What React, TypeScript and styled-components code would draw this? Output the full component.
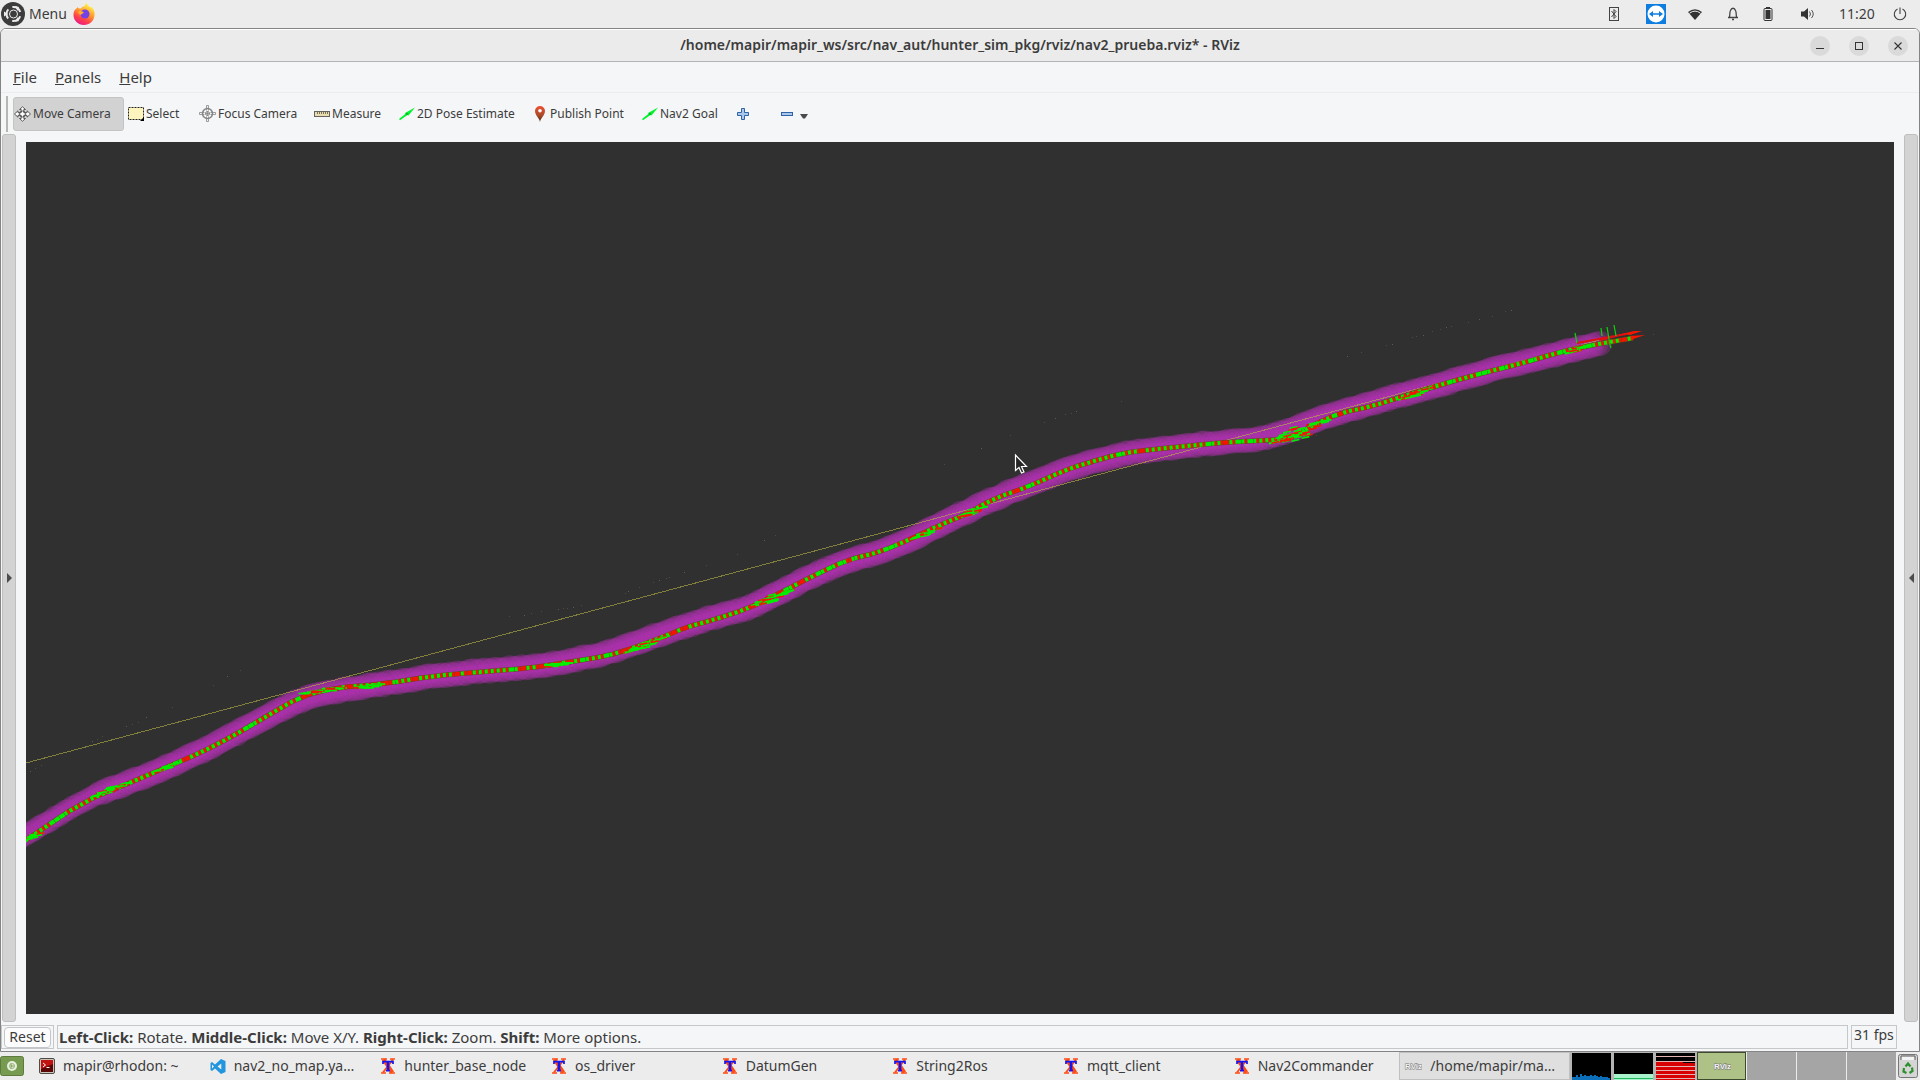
import React from "react";
import styled, { createGlobalStyle } from "styled-components";

const GlobalStyle = createGlobalStyle`
  * { box-sizing: border-box; }
  body { margin: 0; background: #ececec; }
  body, button { font-family: "Noto Sans", "Open Sans", sans-serif; font-size: 14px; line-height: 20px; color: #3c3c3c; }
  button { border: 0; padding: 0; background: none; }
  svg { display: block; flex: none; }
`;

const Desktop = styled.div`
  height: 100vh;
  display: flex;
  flex-direction: column;
  overflow: hidden;
`;

/* ---------- top panel ---------- */
const TopPanel = styled.header`
  height: 28px;
  flex: none;
  display: flex;
  align-items: center;
  justify-content: space-between;
  padding: 0 1px;
`;
const PanelGroup = styled.div`
  display: flex;
  align-items: center;
`;
const MenuButton = styled.button`
  display: flex;
  align-items: center;
  gap: 4px;
  margin-right: 6px;
`;
const TrayButton = styled.button<{ $w: number }>`
  width: ${(p) => p.$w}px;
  height: 28px;
  display: flex;
  align-items: center;
  justify-content: center;
`;

/* ---------- window ---------- */
const WindowFrame = styled.section`
  flex: 1;
  min-height: 0;
  display: flex;
  flex-direction: column;
  background: #f5f6f7;
  border: 1px solid #848484;
  border-radius: 6px 6px 0 0;
  overflow: hidden;
`;
const TitleBar = styled.div`
  height: 33px;
  flex: none;
  display: grid;
  grid-template-columns: 1fr auto 1fr;
  align-items: center;
  background: #ebebeb;
  border-top: 1px solid #ffffff;
  border-bottom: 1px solid #b4b4b4;
`;
const Title = styled.h1`
  grid-column: 2;
  margin: 0;
  padding-bottom: 2px;
  font-size: 14px;
  line-height: 20px;
  font-weight: 600;
`;
const WindowButtons = styled.div`
  display: flex;
  justify-content: flex-end;
  gap: 19px;
  padding-right: 11px;
`;
const RoundButton = styled.button`
  width: 20px;
  height: 20px;
  border-radius: 50%;
  background: #dadada;
  display: flex;
  align-items: center;
  justify-content: center;
`;
const MenuBar = styled.nav`
  height: 31px;
  flex: none;
  display: flex;
  align-items: center;
  gap: 18px;
  padding-left: 12px;
  border-bottom: 1px solid #ebecec;
`;
const MenuItem = styled.button`
  font-size: 15px;
  &::first-letter { text-decoration: underline; }
`;
const ToolBar = styled.div`
  height: 41px;
  flex: none;
  display: flex;
  align-items: center;
  gap: 2px;
  padding-left: 5px;
`;
const Grip = styled.span`
  width: 2px;
  height: 36px;
  background: #b6b6b6;
  margin-right: 3px;
`;
const ToolButton = styled.button<{ $w: number; $gap?: number; $active?: boolean }>`
  width: ${(p) => p.$w}px;
  height: 34px;
  display: flex;
  align-items: center;
  gap: ${(p) => p.$gap ?? 2}px;
  font-size: 12px;
  white-space: nowrap;
  border: 1px solid ${(p) => (p.$active ? "#c4c4c4" : "transparent")};
  border-radius: 3px;
  background: ${(p) => (p.$active ? "#d2d2d2" : "transparent")};
`;
const Workspace = styled.main`
  flex: 1;
  min-height: 0;
  display: flex;
  gap: 10px;
  padding: 0 1px;
`;
const SideHandle = styled.button`
  width: 14px;
  flex: none;
  border: 1px solid #bfbfbf;
  border-radius: 3px;
  background: #d3d3d3;
  display: flex;
  align-items: center;
  justify-content: center;
`;
const Viewport = styled.div`
  flex: 1;
  min-width: 0;
  margin: 8px 0;
  background: #303030;
  overflow: hidden;
`;
const Scene = styled.svg`
  width: 100%;
  height: 100%;
`;
const StatusBar = styled.footer`
  height: 29px;
  flex: none;
  display: flex;
  gap: 3px;
  padding: 3px 22px 2px 0;
  font-size: 15px;
`;
const StatusCell = styled.div<{ $grow?: boolean }>`
  flex: ${(p) => (p.$grow ? "1" : "none")};
  display: flex;
  align-items: center;
  padding: 0 ${(p) => (p.$grow ? 1 : 2)}px;
  border: 1px solid #c6c7c8;
  white-space: pre;
`;
const ResetButton = styled.button`
  width: 47px;
  height: 21px;
  border: 1px solid #c2c6cb;
  border-radius: 4px;
  background: #fcfcfc;
  font-size: 14px;
  line-height: 18px;
`;
const Fps = styled.output`
  width: 40px;
  font-size: 14px;
  white-space: nowrap;
  padding-bottom: 4px;
`;

/* ---------- bottom panel ---------- */
const BottomPanel = styled.footer`
  height: 28px;
  flex: none;
  display: flex;
  align-items: stretch;
`;
const DesktopButton = styled.button`
  width: 24px;
  margin-right: 10px;
  display: flex;
  align-items: center;
`;
const TaskList = styled.div`
  flex: 1;
  min-width: 0;
  display: grid;
  grid-template-columns: repeat(9, 1fr);
`;
const Task = styled.button<{ $active?: boolean }>`
  min-width: 0;
  display: flex;
  align-items: center;
  gap: 8px;
  padding: 0 8px 0 4px;
  border: 1px solid ${(p) => (p.$active ? "#c0c0c0" : "transparent")};
  background: ${(p) => (p.$active ? "#dfdfdf" : "transparent")};
  white-space: nowrap;
`;
const Monitors = styled.div`
  display: flex;
  gap: 3px;
  padding: 1px 2px 0 2px;
  background: #b4b4b4;
`;
const Pager = styled.div`
  display: flex;
  gap: 1px;
  background: #ececec;
`;
const Space = styled.button<{ $active?: boolean }>`
  width: 49px;
  background: ${(p) => (p.$active ? "#aec287" : "#a5a5a5")};
  border: ${(p) => (p.$active ? "1px solid #3d4a2c" : "0")};
  display: flex;
  align-items: center;
  justify-content: center;
`;
const Trash = styled.button`
  width: 24px;
  display: flex;
  align-items: center;
  justify-content: center;
`;

/* ---------- icons ---------- */
const UbuntuMenuIcon = () => (
  <svg width="24" height="24" viewBox="0 0 24 24">
    <circle cx="12" cy="12" r="12" fill="#3c3c3c" />
    <circle cx="12.5" cy="12" r="4" fill="#3c3c3c" stroke="#ececec" strokeWidth="1" />
    <circle cx="12.5" cy="12" r="7" fill="none" stroke="#ececec" strokeWidth="2" strokeDasharray="10 4.66" strokeDashoffset="-2.3" />
    <path d="M3 9.500V14.500L7 12ZM14 4l4 1-1.500 4ZM14 20l4-1-1.500-4Z" fill="#ececec" />
  </svg>
);
const FirefoxIcon = () => (
  <svg width="22" height="22" viewBox="0 0 22 22">
    <defs>
      <linearGradient id="fox" x1="0.8" y1="0" x2="0.3" y2="1">
        <stop offset="0.1" stopColor="#fff04a" />
        <stop offset="0.45" stopColor="#ff9a2a" />
        <stop offset="0.75" stopColor="#ff3e4c" />
        <stop offset="1" stopColor="#e51a8c" />
      </linearGradient>
    </defs>
    <path d="M4.500 4C5 5 6 5.500 8 5.500C9 3.500 11 3 12 3.500C11.500 2 12.500 .5 13.500 0C14 2 16 3 17.500 4.500C18 4.500 18 4 18 3.500C21 6 22 9 21.500 12.500C21 18 16.500 22 11 22C5 22 .5 17.500 .5 12C.3 8.500 1.800 6.500 3.500 5.500Z" fill="url(#fox)" />
    <circle cx="12" cy="11" r="4.500" fill="#7542e5" />
    <path d="M5 9C7 7.500 9 8 11 9.500C10 11 8 10.500 8 12C7 11.500 5.500 11 5 9Z" fill="#ffb02e" />
  </svg>
);
const BluetoothIcon = () => (
  <svg width="12" height="16" viewBox="0 0 12 16" fill="none" stroke="#444">
    <rect x="1.500" y="1.500" width="9" height="13" />
    <path d="M3.500 5L8 10.500L6 12.500V3.500L8 5.500L3.500 11" />
  </svg>
);
const TeamViewerIcon = () => (
  <svg width="20" height="20" viewBox="0 0 20 20">
    <rect width="20" height="20" fill="#0e7de0" />
    <circle cx="10" cy="10" r="8.500" fill="#fff" />
    <path d="M3 10L7 7V9.300H13V7L17 10L13 13V10.700H7V13Z" fill="#0e7de0" />
  </svg>
);
const WifiIcon = () => (
  <svg width="16" height="12" viewBox="0 0 16 12">
    <path d="M8 12L1 4Q8-1.500 15 4Z" fill="#333" />
    <path d="M2.500 5.200Q8 1 13.500 5.200" stroke="#ececec" fill="none" strokeWidth="1" />
  </svg>
);
const BellIcon = () => (
  <svg width="12" height="14" viewBox="0 0 12 14" fill="none" stroke="#444">
    <path d="M1 10.500H11M2.500 10C3 8 2.500 5 3.500 3.500C4.500 .5 7.500 .5 8.500 3.500C9.500 5 9 8 9.500 10M5 12.500H7" strokeWidth="1.300" />
  </svg>
);
const BatteryIcon = () => (
  <svg width="10" height="14" viewBox="0 0 10 14">
    <rect x="3" y="0" width="4" height="2" fill="#333" />
    <rect x="1" y="1.500" width="8" height="12" rx="1" fill="none" stroke="#333" />
    <rect x="2.500" y="3" width="5" height="9" fill="#333" />
  </svg>
);
const SpeakerIcon = () => (
  <svg width="14" height="14" viewBox="0 0 14 14">
    <path d="M0 4.500H3L7 1V13L3 9.500H0Z" fill="#333" />
    <path d="M8.500 4.500Q10.500 7 8.500 9.500M10.500 3Q14 7 10.500 11" fill="none" stroke="#555" />
  </svg>
);
const PowerIcon = () => (
  <svg width="14" height="14" viewBox="0 0 14 14" fill="none" stroke="#444">
    <path d="M7 0.500V7M4.500 2A5.700 5.700 0 1 0 9.500 2" strokeWidth="1.100" />
  </svg>
);
const MoveIcon = () => (
  <svg width="17" height="16" viewBox="0 0 17 16" fill="#fff" stroke="#4a4a4a" strokeWidth="0.9">
    <path d="M8.500 .8L11.500 3.500H9.800V6.700H13V4.800L16.500 8L13 11.200V9.300H9.800V12.500H11.500L8.500 15.200L5.500 12.500H7.200V9.300H4V11.200L.5 8L4 4.800V6.700H7.200V3.500H5.500Z" />
    <circle cx="8.500" cy="8" r="3" fill="none" />
  </svg>
);
const SelectIcon = () => (
  <svg width="17" height="14" viewBox="0 0 17 14">
    <rect x="1.500" y=".5" width="15" height="12" fill="#fdf5bd" stroke="#222" strokeDasharray="2 1" />
    <path d="M17 10V14H13Z" fill="#000" />
  </svg>
);
const FocusIcon = () => (
  <svg width="17" height="17" viewBox="0 0 17 17" fill="none" stroke="#858585">
    <circle cx="8.500" cy="8.500" r="5" strokeWidth="1.500" />
    <circle cx="8.500" cy="8.500" r="2" />
    <path d="M7.500 0.500V5.500M9.500 .5V5.500M7.500 11.500V16.500M9.500 11.500V16.500M.5 7.500H5.500M.5 9.500H5.500M11.500 7.500H16.500M11.500 9.500H16.500M8.500 6V11M6 8.500H11M7.500 .5H9.500M7.500 16.500H9.500M.5 7.500V9.500M16.500 7.500V9.500" strokeWidth=".8" />
  </svg>
);
const RulerIcon = () => (
  <svg width="17" height="6" viewBox="0 0 17 6">
    <rect x="1.500" y=".5" width="15" height="5" fill="#e9dcae" stroke="#66635c" />
    <path d="M4.500 1V3M6.500 1V3M8.500 1V3M10.500 1V3M12.500 1V3M14.500 1V3" stroke="#77705c" />
  </svg>
);
const ArrowToolIcon = () => (
  <svg width="17" height="14" viewBox="0 0 17 14">
    <path d="M1 12L7.500 6.800L7 6L17 .5L10.500 8.500L9.500 8L2 13.300Z" fill="#00f52c" />
    <path d="M7.500 7L9.500 8L9.500 5.800Z" fill="#098a20" />
  </svg>
);
const PinIcon = () => (
  <svg width="17" height="16" viewBox="0 0 17 16">
    <defs>
      <linearGradient id="pin" x1="0" y1="0" x2="0" y2="1">
        <stop offset="0" stopColor="#ee5032" />
        <stop offset="0.6" stopColor="#a84a2a" />
        <stop offset="1" stopColor="#4a2410" />
      </linearGradient>
    </defs>
    <path d="M9 16C8.500 12 4 9.500 4 5A5 5 0 0 1 14 5C14 9.500 9.500 12 9 16Z" fill="url(#pin)" />
    <circle cx="9" cy="4.800" r="1.800" fill="#fff" />
  </svg>
);
const PlusIcon = () => (
  <svg width="13" height="12" viewBox="0 0 13 12">
    <path d="M5.500 .5H8.500V4.500H12.500V7.500H8.500V11.500H5.500V7.500H1.500V4.500H5.500Z" fill="#a9c8ea" stroke="#2f62a8" />
  </svg>
);
const MinusIcon = () => (
  <svg width="13" height="4" viewBox="0 0 13 4">
    <rect x="1.500" y=".5" width="11" height="3" fill="#a9c8ea" stroke="#2f62a8" />
  </svg>
);
const DropIcon = () => (
  <svg width="8" height="10" viewBox="0 0 8 10">
    <path d="M0 5H8L5 9.500H3Z" fill="#4a4a4a" />
  </svg>
);
const SideArrow = ({ left }: { left?: boolean }) => (
  <svg width="5" height="10" viewBox="0 0 5 10">
    <path d={left ? "M5 0V10L0 5Z" : "M0 0V10L5 5Z"} fill="#4c4c4c" />
  </svg>
);
const MinimizeGlyph = () => (
  <svg width="10" height="10" viewBox="0 0 10 10"><path d="M1 7.500H9" stroke="#333" /></svg>
);
const MaximizeGlyph = () => (
  <svg width="10" height="10" viewBox="0 0 10 10"><rect x="1.500" y="1.500" width="7" height="7" fill="none" stroke="#333" /></svg>
);
const CloseGlyph = () => (
  <svg width="10" height="10" viewBox="0 0 10 10"><path d="M1.500 1.500L8.500 8.500M8.500 1.500L1.500 8.500" stroke="#333" strokeWidth="1.100" /></svg>
);
const ShowDesktopIcon = () => (
  <svg width="24" height="20" viewBox="0 0 24 20">
    <rect x=".5" y=".5" width="23" height="19" rx="2" fill="#769a4f" stroke="#5d7b3b" />
    <circle cx="12" cy="10" r="5" fill="#e6eedd" />
    <circle cx="12" cy="10" r="2.500" fill="none" stroke="#9bb87c" />
    <path d="M10 10H14M12 10L10.500 12.500M12 10L10.500 7.500" stroke="#769a4f" strokeWidth=".8" />
  </svg>
);
const TerminalIcon = () => (
  <svg width="16" height="16" viewBox="0 0 16 16">
    <rect x=".5" y=".5" width="15" height="15" rx="1.500" fill="#c9c5bd" stroke="#4c4c44" />
    <rect x="2" y="2" width="12" height="12" fill="#5c0606" />
    <path d="M2 2H14V6L2 11Z" fill="#c11212" />
    <path d="M4 5L6.500 7L4 9M7.500 9.500H10.500" fill="none" stroke="#fff" />
  </svg>
);
const CodeIcon = () => (
  <svg width="16" height="15" viewBox="0 0 15 15">
    <path d="M10.500 0L15 2V13L10.500 15L4.500 9.500L1.500 12L0 11V4L1.500 3L4.500 5.500ZM10.800 4.500L7 7.500L10.800 10.500ZM1.500 5.500V9.500L3.500 7.500Z" fill="#2196de" fillRule="evenodd" />
  </svg>
);
const XtermIcon = () => (
  <svg width="16" height="16" viewBox="0 0 16 16" fill="none">
    <path d="M3.500 1.500L12.500 14.500" stroke="#ff4a12" strokeWidth="3.800" />
    <path d="M13 1.500L3 14.500" stroke="#ff4a12" strokeWidth="2" />
    <path d="M1 1H7M10 1H15M1 15H6M9 15H15" stroke="#ff4a12" strokeWidth="1.600" />
    <path d="M3 6V3.700H13V6M6 12.700H10" stroke="#1414f0" strokeWidth="1.700" />
    <path d="M8 4V12.500" stroke="#1414f0" strokeWidth="2.600" />
  </svg>
);
const RvizIcon = () => (
  <svg width="18" height="12" viewBox="0 0 18 12">
    <text x="1" y="9" fontFamily="Liberation Sans" fontWeight="bold" fontSize="8" fill="#f4f4f4" stroke="#777" strokeWidth="1" paintOrder="stroke">RViz</text>
  </svg>
);
const TrashIcon = () => (
  <svg width="20" height="24" viewBox="0 0 20 24">
    <rect x=".5" y=".5" width="19" height="23" rx="2" fill="#d5d5d5" stroke="#767676" />
    <path d="M3 6V2H17V6" fill="#f4f4f4" stroke="#555" />
    <path d="M7.500 12.500L10 9.500L12.500 12.500M14 13.500L14.500 17L11.500 19M8.500 19L5.500 17.500L6 14" fill="none" stroke="#2f8f2f" strokeWidth="2.200" />
  </svg>
);

/* ---------- system load graphs ---------- */
const CPU_LOAD = [3, 3, 5, 3, 6, 4, 5, 4, 4, 5, 4, 5, 4, 3, 4, 3, 3, 3, 2];
const CpuGraph = () => (
  <svg width="39" height="27" viewBox="0 0 39 27">
    <rect width="39" height="27" fill="#000" />
    {CPU_LOAD.map((h, i) => (
      <rect key={i} x={i * 2} y={27 - h} width="2" height={h} fill="#0a6fb8" />
    ))}
  </svg>
);
const MemoryGraph = () => (
  <svg width="39" height="27" viewBox="0 0 39 27">
    <rect width="39" height="27" fill="#000" />
    <rect y="21" width="39" height="5" fill="#a8f3cb" />
    <rect y="25" width="39" height="1" fill="#20b860" />
    <rect y="26" width="39" height="1" fill="#a8f3cb" />
  </svg>
);
const NetGraph = () => (
  <svg width="39" height="27" viewBox="0 0 39 27">
    <rect width="39" height="27" fill="#000" />
    <path d="M0 9H27V10H39V27H0Z" fill="#d80000" />
    <path d="M0 3.500H39M0 8.500H39M0 13.500H39M0 17.500H39M0 21.500H39M0 25.500H39" stroke="#e4b4b4" />
  </svg>
);

/* ---------- 3D scene: costmap band and pose trail ---------- */
type Pt = [number, number];
const TRAIL: Pt[] = [
  [26, 840], [83, 802], [127, 784], [167, 767], [200, 753], [233, 736], [267, 716], [300, 697], [333, 688],
  [383, 684], [433, 676], [480, 672], [530, 668], [563, 663], [607, 656], [633, 648], [663, 637], [687, 627],
  [713, 620], [747, 609], [780, 593], [813, 576], [847, 560], [880, 552], [913, 538], [940, 525], [967, 514],
  [993, 499], [1030, 486], [1063, 471], [1087, 463], [1123, 453], [1157, 449], [1197, 445], [1230, 442],
  [1273, 440], [1293, 438], [1313, 425], [1340, 413], [1373, 406], [1407, 395], [1450, 382], [1483, 373],
  [1523, 363], [1557, 353], [1587, 346], [1633, 338],
];
const BAND: Pt[] = [
  [14, 842], [26, 835], [83, 800], [127, 783], [167, 767], [200, 752], [233, 735], [267, 717], [300, 700],
  [333, 691], [383, 684], [433, 676], [480, 671], [530, 667], [563, 662], [607, 653], [633, 644], [663, 633],
  [713, 617], [747, 609], [780, 592], [813, 575], [847, 561], [880, 552], [913, 539], [940, 524], [993, 499],
  [1030, 484], [1063, 471], [1087, 463], [1123, 454], [1157, 449], [1230, 441], [1260, 439], [1290, 430],
  [1310, 422], [1340, 412], [1373, 403], [1407, 393], [1450, 382], [1483, 372], [1523, 362], [1557, 354],
  [1587, 346], [1601, 343],
];
const SPECKS: Pt[] = [
  [30, 771], [35, 768], [41, 765], [92, 741], [97, 739], [102, 736], [126, 726], [132, 724], [138, 722], [146, 717],
  [172, 707], [213, 685], [227, 676], [240, 670], [509, 616], [524, 615], [531, 613], [541, 611], [558, 609],
  [563, 608], [567, 608], [573, 607], [581, 605], [625, 593], [628, 591], [639, 587], [653, 582], [659, 580],
  [666, 578], [669, 577], [684, 572], [706, 565], [737, 554], [764, 540], [775, 535], [944, 464], [981, 448],
  [1010, 435], [1044, 422], [1055, 418], [1065, 414], [1071, 413], [1076, 411], [1121, 401], [1316, 435],
  [1347, 356], [1361, 352], [1386, 345], [1392, 344], [1412, 337], [1416, 336], [1423, 335], [1432, 331],
  [1440, 329], [1446, 327], [1451, 326], [1468, 322], [1479, 319], [1492, 316], [1505, 311], [1511, 310], [1653, 334],
];
/* places where the poses bunch up into a thicker knot: x, y, half length, half height */
const KNOTS: [number, number, number, number][] = [
  [32, 836, 8, 3], [110, 789, 18, 3], [165, 767, 12, 2], [322, 690, 22, 2], [370, 685, 14, 2], [555, 664, 14, 2],
  [645, 644, 22, 3], [770, 598, 22, 4], [925, 533, 14, 2], [972, 511, 14, 3], [1299, 431, 30, 9], [1415, 393, 16, 3],
  [1576, 349, 10, 2],
];

const noise = (n: number) => {
  const v = Math.sin(n * 12.9898) * 43758.5453;
  return v - Math.floor(v);
};
/* corner cutting, rounds the joints of the polyline */
const smooth = (pts: Pt[]): Pt[] => {
  const out: Pt[] = [pts[0]];
  for (let i = 1; i < pts.length; i++) {
    const [x0, y0] = pts[i - 1];
    const [x1, y1] = pts[i];
    out.push([x0 * 0.75 + x1 * 0.25, y0 * 0.75 + y1 * 0.25], [x0 * 0.25 + x1 * 0.75, y0 * 0.25 + y1 * 0.75]);
  }
  out.push(pts[pts.length - 1]);
  return out;
};
const resample = (pts: Pt[], step: number) => {
  const out: { x: number; y: number; a: number }[] = [];
  let rest = 0;
  for (let i = 1; i < pts.length; i++) {
    const [x0, y0] = pts[i - 1];
    const dx = pts[i][0] - x0;
    const dy = pts[i][1] - y0;
    const len = Math.hypot(dx, dy);
    let d = rest;
    for (; d < len; d += step) {
      out.push({ x: x0 + (dx * d) / len, y: y0 + (dy * d) / len, a: (Math.atan2(dy, dx) * 180) / Math.PI });
    }
    rest = d - len;
  }
  return out;
};
const GREEN = "#00f000";
const RED = "#f41500";
const toPoints = (pts: Pt[]) => pts.map((p) => p.join(",")).join(" ");
const band = smooth(BAND);
const trail = smooth(TRAIL);

const RobotScene = () => (
  <Scene viewBox="26 142 1868 872" preserveAspectRatio="xMinYMin slice" role="img" aria-label="Robot path in the 3D view">
    {SPECKS.map(([x, y], i) => (
      <rect key={i} x={x} y={y} width="1" height="1" fill={i % 3 ? "#4a4b43" : "#5c5e49"} />
    ))}
    <g fill="#b231b2" fillOpacity=".3">
      {resample(band, 4).map((p, i) => (
        <circle key={i} cx={p.x} cy={p.y + noise(i) * 2 - 1} r={p.x < 100 ? 11 : 12.5} />
      ))}
    </g>
    <polyline points={toPoints(band)} fill="none" stroke="#ae31ae" strokeWidth="13" strokeOpacity=".4" />
    <path d="M26 763L1603 339" stroke="#b4b043" strokeOpacity=".62" shapeRendering="crispEdges" />
    <polyline points={toPoints(trail)} fill="none" stroke="#5c4a10" strokeWidth="5" strokeOpacity=".85" />
    {resample(trail, 3).map((p, i) => (
      <rect
        key={i}
        x="-1.5"
        y="-2"
        width={i % 2 === 0 ? 3.6 : 2.6}
        height="4"
        fill={(i % 2 === 0) !== (noise(i * 3.1) > 0.88) ? GREEN : RED}
        transform={`translate(${p.x} ${p.y}) rotate(${p.a})`}
      />
    ))}
    {KNOTS.map(([kx, ky, w, h], k) => (
      <g key={k} transform={`translate(${kx} ${ky}) rotate(${kx > 300 && kx < 560 ? -8 : -22})`}>
        {Array.from({ length: w * 2 }, (_, i) => {
          const u = noise(k * 97 + i) * 2 - 1;
          const v = (noise(k * 31 + i * 1.7) * 2 - 1) * (1 - Math.abs(u));
          return (
            <rect key={i} x={u * w - 3} y={v * h} width="8" height="1.6" transform={`rotate(10 ${u * w} ${v * h})`} fill={noise(i * 5.3 + k) > 0.3 ? GREEN : RED} />
          );
        })}
      </g>
    ))}
    <path d="M1577 343L1626 334M1600 340L1620 335" stroke="#e01010" strokeWidth="2" />
    <path d="M1622 334L1634 331L1642 331L1630 335ZM1630 336L1645 335L1633 339Z" fill="#fa1400" />
    <path d="M1575 333L1577 343M1601 328L1602 336M1607 327L1610 345L1611 348M1614 325L1616 336" stroke="#10c810" strokeWidth="1.300" />
    <path d="M1015.500 455V470.500L1019 467.500L1021.500 473L1024 472L1021.500 466.500H1026.500Z" fill="#262626" stroke="#fff" strokeWidth="1.200" />
  </Scene>
);

const TOOLS = [
  { label: "Move Camera", icon: <MoveIcon />, width: 111, active: true },
  { label: "Select", icon: <SelectIcon />, width: 70 },
  { label: "Focus Camera", icon: <FocusIcon />, width: 112 },
  { label: "Measure", icon: <RulerIcon />, width: 83 },
  { label: "2D Pose Estimate", icon: <ArrowToolIcon />, width: 131 },
  { label: "Publish Point", icon: <PinIcon />, width: 108 },
  { label: "Nav2 Goal", icon: <ArrowToolIcon />, width: 93 },
];
const TASKS = [
  { label: "mapir@rhodon: ~", icon: <TerminalIcon /> },
  { label: "nav2_no_map.ya…", icon: <CodeIcon /> },
  { label: "hunter_base_node", icon: <XtermIcon /> },
  { label: "os_driver", icon: <XtermIcon /> },
  { label: "DatumGen", icon: <XtermIcon /> },
  { label: "String2Ros", icon: <XtermIcon /> },
  { label: "mqtt_client", icon: <XtermIcon /> },
  { label: "Nav2Commander", icon: <XtermIcon /> },
  { label: "/home/mapir/ma…", icon: <RvizIcon />, active: true },
];

export default function App() {
  return (
    <Desktop>
      <GlobalStyle />
      <TopPanel>
        <PanelGroup>
          <MenuButton><UbuntuMenuIcon />Menu</MenuButton>
          <button aria-label="Firefox"><FirefoxIcon /></button>
        </PanelGroup>
        <PanelGroup>
          <TrayButton $w={43} aria-label="Bluetooth"><BluetoothIcon /></TrayButton>
          <TrayButton $w={42} aria-label="TeamViewer"><TeamViewerIcon /></TrayButton>
          <TrayButton $w={36} aria-label="Network"><WifiIcon /></TrayButton>
          <TrayButton $w={40} aria-label="Notifications"><BellIcon /></TrayButton>
          <TrayButton $w={30} aria-label="Battery"><BatteryIcon /></TrayButton>
          <TrayButton $w={50} aria-label="Volume"><SpeakerIcon /></TrayButton>
          <TrayButton $w={48}>11:20</TrayButton>
          <TrayButton $w={38} aria-label="Power"><PowerIcon /></TrayButton>
        </PanelGroup>
      </TopPanel>
      <WindowFrame>
        <TitleBar>
          <Title>/home/mapir/mapir_ws/src/nav_aut/hunter_sim_pkg/rviz/nav2_prueba.rviz* - RViz</Title>
          <WindowButtons>
            <RoundButton aria-label="Minimize"><MinimizeGlyph /></RoundButton>
            <RoundButton aria-label="Maximize"><MaximizeGlyph /></RoundButton>
            <RoundButton aria-label="Close"><CloseGlyph /></RoundButton>
          </WindowButtons>
        </TitleBar>
        <MenuBar>
          <MenuItem>File</MenuItem>
          <MenuItem>Panels</MenuItem>
          <MenuItem>Help</MenuItem>
        </MenuBar>
        <ToolBar>
          <Grip />
          {TOOLS.map((t) => (
            <ToolButton key={t.label} $w={t.width} $active={t.active}>{t.icon}{t.label}</ToolButton>
          ))}
          <ToolButton $w={42} aria-label="Add tool"><PlusIcon /></ToolButton>
          <ToolButton $w={34} $gap={7} aria-label="Remove tool"><MinusIcon /><DropIcon /></ToolButton>
        </ToolBar>
        <Workspace>
          <SideHandle aria-label="Show left dock"><SideArrow /></SideHandle>
          <Viewport><RobotScene /></Viewport>
          <SideHandle aria-label="Show right dock"><SideArrow left /></SideHandle>
        </Workspace>
        <StatusBar>
          <StatusCell><ResetButton>Reset</ResetButton></StatusCell>
          <StatusCell $grow>
            <span><b>Left-Click:</b> Rotate. <b>Middle-Click:</b> Move X/Y. <b>Right-Click:</b> Zoom. <b>Shift:</b> More options.</span>
          </StatusCell>
          <StatusCell><Fps>31 fps</Fps></StatusCell>
        </StatusBar>
      </WindowFrame>
      <BottomPanel>
        <DesktopButton aria-label="Show desktop"><ShowDesktopIcon /></DesktopButton>
        <TaskList>
          {TASKS.map((t) => (
            <Task key={t.label} $active={t.active}>{t.icon}{t.label}</Task>
          ))}
        </TaskList>
        <Monitors><CpuGraph /><MemoryGraph /><NetGraph /></Monitors>
        <Pager>
          <Space $active aria-label="Workspace 1"><RvizIcon /></Space>
          <Space aria-label="Workspace 2" />
          <Space aria-label="Workspace 3" />
          <Space aria-label="Workspace 4" />
        </Pager>
        <Trash aria-label="Trash"><TrashIcon /></Trash>
      </BottomPanel>
    </Desktop>
  );
}
